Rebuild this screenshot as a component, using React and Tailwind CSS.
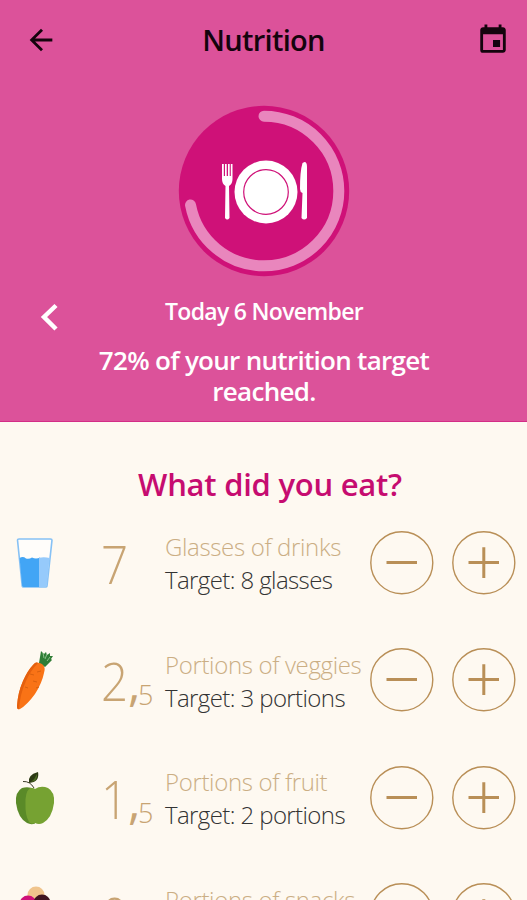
import { MdArrowBack, MdEvent } from "react-icons/md";

// ── Food icons ───────────────────────────────────────────────────────────────
const GlassIcon = () => (
    <svg className="w-[38px] h-[50px]" viewBox="0 0 38 50">
        <path d="M1.5 2 Q1.5 1 3 1 H34.5 Q36 1 36 2.2 L31 48 Q30.8 49 29.5 49 H7.5 Q6.4 49 6.2 48 Z" fill="#fffdfa" stroke="#86c1f5" strokeWidth="1.6" />
        <path d="M3.6 20 Q7 18 10 20.5 Q13 21.5 16 19.5 Q20 21.5 24 19.5 V49 H7.5 L6.2 48 Z" fill="#42a5f5" />
        <path d="M23 19.8 Q28 18.5 33.6 20 L30.8 48 L29.5 49 H23 Z" fill="#96cafb" />
    </svg>
);

const CarrotIcon = () => (
    <svg className="w-[38px] h-[60px]" viewBox="0 0 38 60">
        <path d="M23 13 L25 1 L28 4 L30 2 L31 5 L34 3 L34 6 L37 6 L35 9 L36 10 L29 17 Z" fill="#2f7d35" />
        <path d="M27 3 L28 8 M31 4 L29 9 M34 7 L31 11" stroke="#8bc08a" strokeWidth="1" fill="none" />
        <path d="M17 15 Q20 11 26 14 Q30 17 28 23 Q26 33 19 44 Q11 55 4 59 Q1 60 1 56 Q2 42 7 31 Q12 20 17 15 Z" fill="#f97316" />
        <path d="M17 15 Q20 11 22 13 Q15 20 10 31 Q4 44 3 59 Q1 60 1 56 Q2 42 7 31 Q12 20 17 15 Z" fill="#e4600e" />
        <path d="M14 24 l4 1 M21 22 l4 -1 M17 31 l4 1 M9 37 l3 1 M20 38 l3 -1" stroke="#d9600f" strokeWidth="1" />
    </svg>
);

const AppleIcon = () => (
    <svg className="w-[40px] h-[54px]" viewBox="0 0 40 54">
        <path d="M8 10.5 Q15 10 19 17" stroke="#3b3b28" strokeWidth="1" fill="none" />
        <path d="M14 12 Q12 4 23 1 Q25 11 14 12 Z" fill="#2c3a14" />
        <path d="M16 11 Q20 8 22 3 Q23 10 16 11 Z" fill="#4c6a24" />
        <path d="M20 18 Q13 15 7 17 Q0 21 1 32 Q3 47 12 52 Q16 54 20 52.5 Z" fill="#5a8a28" />
        <path d="M20 18 Q26 14 33 17 Q40 21 39 32 Q37 47 28 52 Q24 54 20 52 Q16 54 14 51 Q10 44 10.500 33 Q10 21 15 17 Q18 16.500 20 18 Z" fill="#76a232" />
    </svg>
);

const SnackIcon = () => (
    <svg className="w-[32px] h-[58px]" viewBox="0 0 32 58">
        <circle cx="17" cy="9" r="8.500" fill="#f0c48c" />
        <circle cx="9" cy="18" r="8.500" fill="#cf1178" />
        <circle cx="23" cy="17" r="8.500" fill="#3f1420" />
        <path d="M3 28 H29 L16 57 Z" fill="#d79c55" />
    </svg>
);

const items = [
    { icon: GlassIcon, whole: "7", label: "Glasses of drinks", target: "Target: 8 glasses" },
    { icon: CarrotIcon, whole: "2", part: "5", label: "Portions of veggies", target: "Target: 3 portions" },
    { icon: AppleIcon, whole: "1", part: "5", label: "Portions of fruit", target: "Target: 2 portions" },
    { icon: SnackIcon, whole: "0", label: "Portions of snacks", target: "Target: 1 portion" },
];

// ── Round +/- button ─────────────────────────────────────────────────────────
function StepButton({ plus }) {
    return (
        <button className="w-16 h-16 shrink-0">
            <svg className="w-16 h-16" viewBox="0 0 64 64" fill="none" stroke="#b98f57">
                <circle cx="31.800" cy="31.700" r="31" strokeWidth="1.4" />
                <path d={plus ? "M16.500 31.500 H47 M31.800 16.200 V47" : "M16.500 31.500 H47"} strokeWidth="3" />
            </svg>
        </button>
    );
}

function FoodRow({ item }) {
    const Icon = item.icon;
    return (
        <li className="flex items-center h-[117.5px] shrink-0">
            <div className="w-[70px] flex justify-center shrink-0">
                <Icon />
            </div>
            <div className="w-[95px] pl-[31px] shrink-0 flex items-baseline text-[#c8a473] font-light leading-none whitespace-nowrap">
                <span className="w-[27px] text-[54px] origin-left scale-x-[0.88]">{item.whole}</span>
                {item.part && (
                    <>
                        <span className="w-[10px] text-[48px] font-normal">,</span>
                        <span className="text-[27px] translate-y-1">{item.part}</span>
                    </>
                )}
            </div>
            <div className="w-[205px] shrink-0 pt-px text-[24px] leading-[33px] font-light whitespace-nowrap">
                <p className="text-[#cbae84] tracking-[-0.35px]">{item.label}</p>
                <p className="text-[#333333] tracking-[-0.6px]">{item.target}</p>
            </div>
            <div className="flex gap-[18px]">
                <StepButton />
                <StepButton plus />
            </div>
        </li>
    );
}

// ── Progress dial: 72% of the ring is filled ─────────────────────────────────
function Dial() {
    return (
        <svg className="w-[172px] h-[172px]" viewBox="0 0 172 172">
            <circle cx="86" cy="86" r="85.200" fill="#cf1178" />
            <circle
                cx="86" cy="86" r="74.800" fill="none" stroke="#e986bd" strokeWidth="11"
                strokeLinecap="round" pathLength="100" strokeDasharray="72 100"
                transform="rotate(-90 86 86)"
            />
            {/* plate */}
            <circle cx="88" cy="87" r="31.500" fill="#fff" />
            <circle cx="88" cy="87" r="22.300" fill="none" stroke="#cf1178" strokeWidth="1.200" />
            {/* fork */}
            <path d="M44 59 V74 Q44 79 47.500 81 L47 113 Q49.200 116 51.500 113 L51 81 Q54.500 79 54.500 74 V59 H52.800 V71 H51.700 V59 H50 V71 H48.700 V59 H47 V71 H45.800 V59 Z" fill="#fff" />
            {/* knife */}
            <path d="M126.500 57 Q129 57 129 62 V113 Q126 116 123.500 113 L124.500 88 Q122 87 122 84 Q122 66 124.500 58 Z" fill="#fff" />
        </svg>
    );
}

export default function App() {
    return (
        <div className="w-full h-[900px] overflow-hidden flex flex-col bg-[#fef9f1] font-['Open_Sans','Noto_Sans',sans-serif]">
            <header className="h-[422px] shrink-0 flex flex-col items-center bg-[#dc529a] border-b border-[#d42d87] text-white font-semibold">
                <div className="h-20 w-full grid grid-cols-[1fr_auto_1fr] items-center pl-6 pr-[17px] pb-px text-[#14040d]">
                    <MdArrowBack className="w-[34px] h-[34px]" />
                    <h1 className="pr-[7px] text-[29px] leading-none tracking-[-0.7px] whitespace-nowrap">Nutrition</h1>
                    <MdEvent className="w-[34px] h-[34px] justify-self-end" />
                </div>
                <div className="pt-[25px]">
                    <Dial />
                </div>
                <div className="w-full flex justify-between pl-[39px] pr-[38px] pt-[20px]">
                    <svg className="w-[22px] h-[30px] mt-[5px]" viewBox="0 0 22 30" fill="none" stroke="#fff" strokeWidth="4.500">
                        <path d="M17 3.500 L5 15 L17 27" />
                    </svg>
                    <p className="text-[23px] leading-[28px] tracking-[-0.7px] whitespace-nowrap">Today 6 November</p>
                    <span className="w-[22px]" />
                </div>
                <p className="text-[26px] leading-[31px] tracking-[-0.7px] text-center pl-px pt-[13px] whitespace-nowrap">
                    72% of your nutrition target
                    <br />
                    reached.
                </p>
            </header>
            <main className="flex flex-col">
                <h2 className="h-[82px] pl-[13px] pt-[42px] text-center text-[31px] leading-[40px] tracking-[-0.25px] font-semibold text-[#c60c70] whitespace-nowrap">
                    What did you eat?
                </h2>
                <ul className="flex flex-col">
                    {items.map((item) => (
                        <FoodRow key={item.label} item={item} />
                    ))}
                </ul>
            </main>
        </div>
    );
}
